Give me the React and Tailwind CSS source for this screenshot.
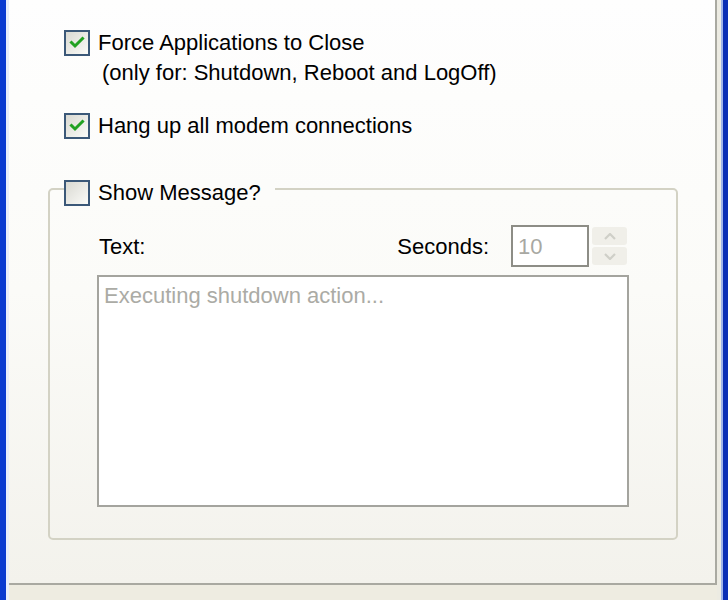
import React from 'react';

const font = { fontFamily: '"Liberation Sans", Arial, sans-serif' };

const CheckBox = ({ checked }) => (
  <span className="flex h-[26px] w-[26px] shrink-0 items-center justify-center border-2 border-[#3b5878] bg-linear-to-br from-[#d9d9d2] to-[#fbfbf8]">
    {checked && (
      <svg width="18" height="18" viewBox="0 0 18 18">
        <path d="M3.5 8.5 L7 12 L14.5 4.5" fill="none" stroke="#21a121" strokeWidth="3" strokeLinecap="square" />
      </svg>
    )}
  </span>
);

const SpinButton = () => (
  <div className="flex h-[38px] w-[35px] flex-col gap-[2px]">
    <div className="flex flex-1 items-center justify-center rounded-[3px] bg-[#f0efe9]">
      <svg width="12" height="7" viewBox="0 0 12 7">
        <path d="M1 6 L6 1 L11 6" fill="none" stroke="#cfcfc8" strokeWidth="2.2" />
      </svg>
    </div>
    <div className="flex flex-1 items-center justify-center rounded-[3px] bg-[#f0efe9]">
      <svg width="12" height="7" viewBox="0 0 12 7">
        <path d="M1 1 L6 6 L11 1" fill="none" stroke="#cfcfc8" strokeWidth="2.2" />
      </svg>
    </div>
  </div>
);

export default function App() {
  return (
    <div className="flex h-[600px] w-[728px] bg-white text-[22px] text-black" style={font}>
      {/* left window frame */}
      <div className="w-[6px] shrink-0 bg-[#0a3ad0]" />
      <div className="w-[3px] shrink-0 bg-[#e9eefb]" />

      <div className="flex min-w-0 flex-1 flex-col bg-[#eeece1]">
        {/* tab page */}
        <div className="flex h-[585px] flex-col border-r-2 border-b-2 border-[#a9a9a1] bg-linear-to-b from-[#fefefe] via-[#fbfbf8] to-[#f3f2ec] pl-[39px] pr-[37px] pt-[30px]">
          <div className="flex flex-col pl-[16px]">
            <div className="flex items-center gap-[8px] leading-[26px]">
              <CheckBox checked />
              <span>Force Applications to Close</span>
            </div>
            <div className="ml-[38px] mt-[4px] leading-[26px]">(only for: Shutdown, Reboot and LogOff)</div>
            <div className="mt-[27px] flex items-center gap-[8px] leading-[26px]">
              <CheckBox checked />
              <span>Hang up all modem connections</span>
            </div>
          </div>

          {/* group box */}
          <div className="mt-[49px] rounded-[5px] border-2 border-[#d3d2c4] px-[47px] pb-[31px]">
            <div className="-ml-[33px] -mt-[10px] flex w-fit items-center gap-[8px] bg-[#fcfcfa] pr-[14px] leading-[26px]">
              <CheckBox />
              <span>Show Message?</span>
            </div>

            <div className="mr-[2px] mt-[19px] flex items-center justify-between">
              <span className="ml-[2px]">Text:</span>
              <div className="flex items-center">
                <span className="mr-[22px]">Seconds:</span>
                <div className="flex h-[42px] w-[78px] items-center border-2 border-[#8d8d86] bg-white pl-[5px] text-[#a8a8a2]">
                  10
                </div>
                <div className="ml-[3px]">
                  <SpinButton />
                </div>
              </div>
            </div>

            <div className="mt-[8px] h-[232px] border-2 border-[#a4a49e] bg-white px-[5px] pt-[6px] leading-[26px] text-[#ababa5]">
              Executing shutdown action...
            </div>
          </div>
        </div>
      </div>

      {/* right window frame */}
      <div className="w-[4px] shrink-0 bg-[#ecebe2]" />
      <div className="w-[2px] shrink-0 bg-[#9fb3e8]" />
      <div className="w-[5px] shrink-0 bg-[#0a2eb5]" />
    </div>
  );
}
